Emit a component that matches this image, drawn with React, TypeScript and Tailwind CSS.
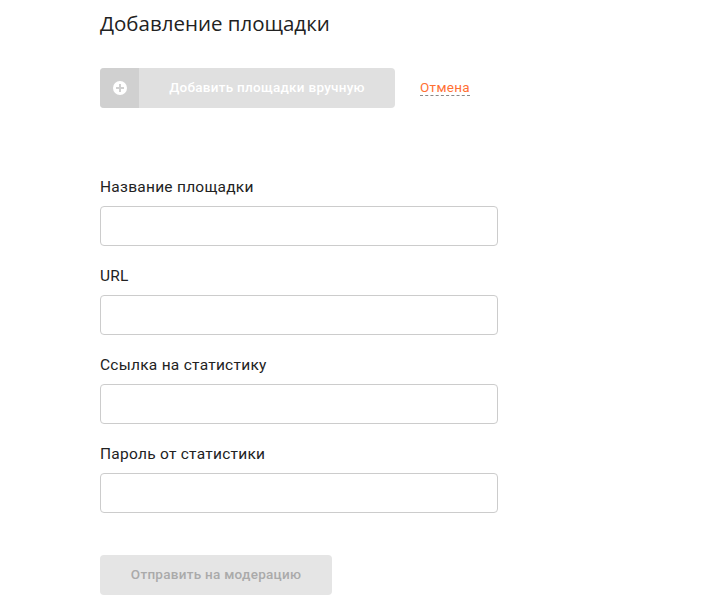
const fields = [
  { id: 'name', label: 'Название площадки' },
  { id: 'url', label: 'URL' },
  { id: 'statsLink', label: 'Ссылка на статистику' },
  { id: 'statsPassword', label: 'Пароль от статистики' },
]

export default function App() {
  return (
    <main className="min-h-screen bg-white pl-[100px] font-['Roboto',sans-serif] text-[#222]">
      <h1 className="pt-[7px] font-['Open_Sans',sans-serif] text-[20.5px] leading-8 whitespace-nowrap">
        Добавление площадки
      </h1>

      <div className="mt-[29px] flex items-center">
        <button disabled className="flex h-10 w-[295px] overflow-hidden rounded bg-[#e0e0e0] text-[13.5px] font-medium tracking-[0.27px] text-white">
          <span className="grid h-10 w-[39px] place-items-center bg-[#d0d0d0]">
            <svg width="14" height="14" viewBox="0 0 14 14">
              <circle cx="7" cy="7" r="7" fill="#fff" />
              <path d="M7 3v8M3 7h8" stroke="#d0d0d0" strokeWidth="2" />
            </svg>
          </span>
          <span className="flex-1 leading-[39px] whitespace-nowrap">Добавить площадки вручную</span>
        </button>
        <a
          href="#"
          className="mb-px ml-[25px] h-[17px] border-b border-dashed border-[#888] text-[13.5px] leading-[17px] tracking-[0.3px] text-[#ff7033]"
        >
          Отмена
        </a>
      </div>

      <form className="mt-[69px] w-[398px]">
        <div className="space-y-5">
          {fields.map((field) => (
            <div key={field.id}>
              <label htmlFor={field.id} className="block h-[29px] text-[15.5px] leading-5 tracking-[0.26px]">
                {field.label}
              </label>
              <input
                id={field.id}
                className="block h-10 w-full rounded border border-[#ccc] bg-white px-3 text-[15px] outline-none"
              />
            </div>
          ))}
        </div>

        <button
          disabled
          className="mt-[42px] block h-10 w-[232px] rounded bg-[#e5e5e5] pb-px text-[13.5px] font-medium tracking-[0.27px] text-[#aaa]"
        >
          Отправить на модерацию
        </button>
      </form>
    </main>
  )
}
